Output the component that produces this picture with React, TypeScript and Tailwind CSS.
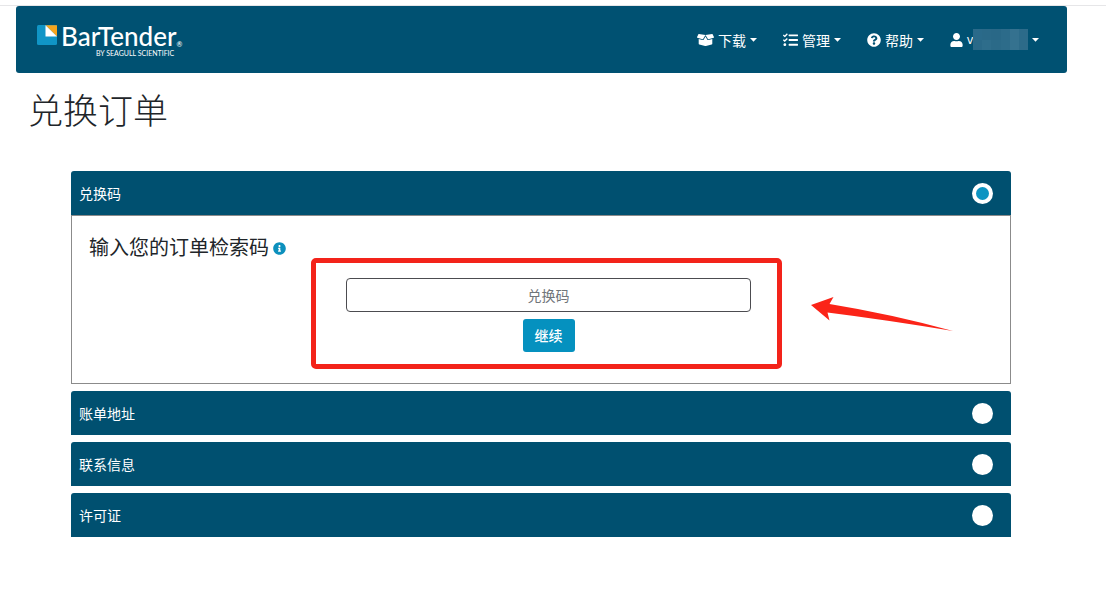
import type { ReactNode } from 'react';
import { FaBoxOpen, FaInfoCircle, FaQuestionCircle, FaTasks, FaUser } from 'react-icons/fa';

const collapsedSteps = ['账单地址', '联系信息', '许可证'];

const maskTiles = [
  'bg-[#2a6a8a]', 'bg-[#2a6988]', 'bg-[#296887]', 'bg-[#2c6b8a]', 'bg-[#34718f]', 'bg-[#2c6b8a]',
  'bg-[#2a6988]', 'bg-[#2e6d8b]', 'bg-[#2b6a88]', 'bg-[#2d6c8a]', 'bg-[#35728f]', 'bg-[#2d6b89]',
];

function Caret() {
  return (
    <svg viewBox="0 0 7 4" className="h-1 w-[7px]" fill="currentColor" aria-hidden="true">
      <path d="M0 0H7L3.500 3.800Z" />
    </svg>
  );
}

function NavItem({ icon, children }: { icon: ReactNode; children: ReactNode }) {
  return (
    <button type="button" className="flex items-center gap-1 whitespace-nowrap">
      {icon}
      {children}
      <Caret />
    </button>
  );
}

function Logo() {
  return (
    <a href="#" aria-label="BarTender" className="flex items-start gap-1 self-start pt-4">
      <svg viewBox="0 0 20 20" className="mt-[3px] h-5 w-5" aria-hidden="true">
        <rect width="20" height="20" rx="1.5" fill="#1095c6" />
        <path d="M8.500 0.300H20V11.500Z" fill="#f7a51d" />
        <path d="M8.500 0.300V11.500H20Z" fill="#fff" />
      </svg>
      <span className="flex flex-col items-end">
        <span className="flex items-end font-['Lato','Noto_Sans',sans-serif] text-[26px] leading-7 font-medium">
          BarTender<span className="text-[7px] leading-3">®</span>
        </span>
        <span className="pr-2 font-['Lato','Noto_Sans',sans-serif] text-[7px] leading-[7px]">BY SEAGULL SCIENTIFIC</span>
      </span>
    </a>
  );
}

function StepHeader({ title, active = false }: { title: string; active?: boolean }) {
  return (
    <button
      type="button"
      aria-expanded={active}
      className="flex h-11 w-full items-center justify-between rounded-t-[3px] bg-[#005070] pr-[18px] pl-2 text-sm text-white"
    >
      {title}
      <span className="flex h-[21px] w-[21px] items-center justify-center rounded-full bg-white">
        {active && <span className="h-[13px] w-[13px] rounded-full bg-[#0c94c2]" />}
      </span>
    </button>
  );
}

export default function App() {
  return (
    <div className="bg-white pt-[5px] font-['Noto_Sans_CJK_SC',sans-serif] text-[#212529]">
      <div className="border-t border-[#e6e6e8] pr-[39px] pl-4">
        <header className="flex h-[67px] items-center justify-between rounded-[3px] bg-[#005172] pr-7 pl-[21px] text-white">
          <Logo />
          <nav className="flex items-center gap-[26px] text-sm">
            <NavItem icon={<FaBoxOpen className="h-4 w-[17px]" />}>下载</NavItem>
            <NavItem icon={<FaTasks className="h-4 w-[15px]" />}>管理</NavItem>
            <NavItem icon={<FaQuestionCircle className="h-[14px] w-[14px]" />}>帮助</NavItem>
            <NavItem icon={<FaUser className="h-[14px] w-[13px]" />}>
              <span className="flex items-center">
                <span className="font-['Noto_Sans',sans-serif] text-xs">v</span>
                <span className="grid h-[21px] w-[55px] grid-cols-6" aria-hidden="true">
                  {maskTiles.map((tile, i) => (
                    <span key={i} className={tile} />
                  ))}
                </span>
              </span>
            </NavItem>
          </nav>
        </header>

        <main>
          <h1 className="mt-[11px] ml-3 text-[35px] leading-[50px] font-light">兑换订单</h1>

          <div className="mt-[37px] mr-14 ml-[55px] flex flex-col gap-[7px]">
            <section>
              <StepHeader title="兑换码" active />
              <div className="border border-[#8b8b8b] px-[17px] pt-4 pb-[31px]">
                <h2 className="flex items-center gap-1 text-[20px] leading-[30px]">
                  输入您的订单检索码
                  <FaInfoCircle className="mt-[3px] h-[13px] w-[13px] text-[#0c90bd]" />
                </h2>
                <div className="pt-4 pl-[15px]">
                  <form
                    className="relative mx-auto flex w-full max-w-[405px] flex-col items-center gap-[7px]"
                    onSubmit={(e) => e.preventDefault()}
                  >
                    <input
                      type="text"
                      aria-label="兑换码"
                      placeholder="兑换码"
                      className="h-[34px] w-full rounded-[4px] border border-[#4c4c50] text-center text-sm placeholder:text-[#70757a]"
                    />
                    <button type="submit" className="h-[33px] rounded-[3px] bg-[#0591bf] px-3 pb-0.5 text-sm font-medium text-white">
                      继续
                    </button>
                    <div className="pointer-events-none absolute -top-5 -right-[31px] -bottom-[17px] -left-[35px] rounded-[5px] border-[5px] border-[#f3231a]" />
                    <svg
                      viewBox="0 0 142 36"
                      className="pointer-events-none absolute top-[17px] left-full ml-[60px] h-9 w-[142px]"
                      aria-hidden="true"
                    >
                      <path d="M0 10L22.500 2L18.500 9Q80 19 142 36Q76 25 16.500 17.500L18.500 25.500Z" fill="#fb2418" />
                    </svg>
                  </form>
                </div>
              </div>
            </section>
            {collapsedSteps.map((title) => (
              <section key={title}>
                <StepHeader title={title} />
              </section>
            ))}
          </div>
        </main>
      </div>
    </div>
  );
}
